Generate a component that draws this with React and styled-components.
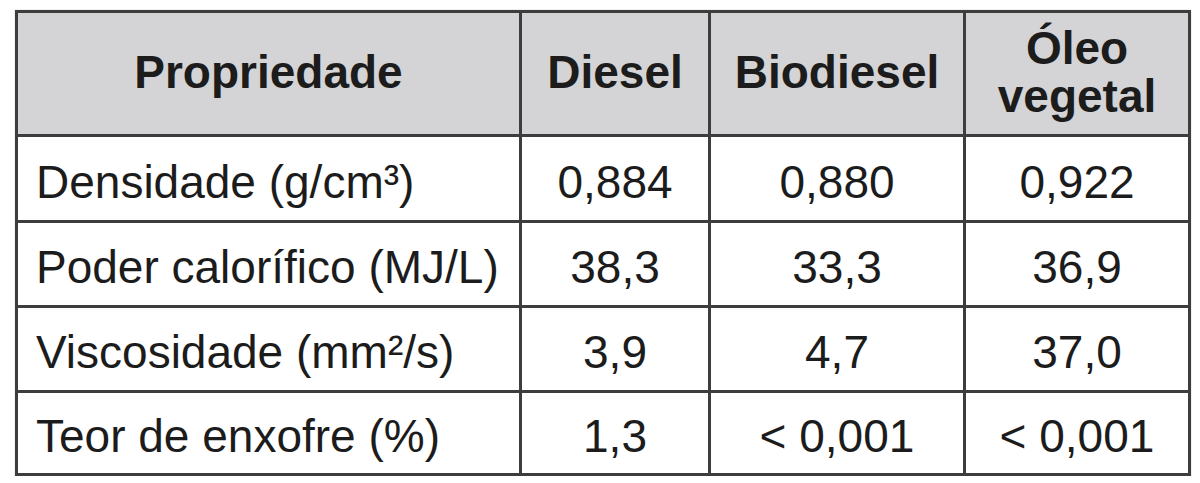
import React from 'react';
import styled, { createGlobalStyle } from 'styled-components';

const GlobalStyle = createGlobalStyle`
  html, body {
    margin: 0;
    padding: 0;
    background: #ffffff;
  }
  body {
    font-family: 'Liberation Sans', Arial, sans-serif;
    color: #1c1c1c;
  }
`;

const Page = styled.div`
  padding: 10px 0 0 15px;
`;

// grid lines are drawn by the dark background showing through the gaps
const Table = styled.div`
  display: inline-grid;
  grid-template-columns: 501px 186px 252px 222px;
  grid-template-rows: 121px 83px 82px 82px 80px;
  gap: 3px;
  padding: 3px;
  background: #3d3d3d;
  box-shadow: 0 0 1px rgba(0, 0, 0, 0.35);
`;

const HeadCell = styled.div`
  display: flex;
  align-items: center;
  justify-content: center;
  text-align: center;
  background: #d4d4d6;
  font-weight: 700;
  font-size: 46px;
  line-height: 1.04;
  padding-bottom: 2px;
`;

const Cell = styled.div`
  display: flex;
  align-items: center;
  justify-content: ${(p) => (p.$left ? 'flex-start' : 'center')};
  padding-left: ${(p) => (p.$left ? '18px' : '0')};
  padding-top: 6px;
  background: #ffffff;
  font-size: 46px;
  white-space: nowrap;
`;

const headers = ['Propriedade', 'Diesel', 'Biodiesel', ['Óleo', 'vegetal']];

const rows = [
  ['Densidade (g/cm³)', '0,884', '0,880', '0,922'],
  ['Poder calorífico (MJ/L)', '38,3', '33,3', '36,9'],
  ['Viscosidade (mm²/s)', '3,9', '4,7', '37,0'],
  ['Teor de enxofre (%)', '1,3', '< 0,001', '< 0,001'],
];

export default function App() {
  return (
    <>
      <GlobalStyle />
      <Page>
        <Table>
          {headers.map((h, i) => (
            <HeadCell key={i}>
              {Array.isArray(h) ? (
                <span>
                  {h[0]}
                  <br />
                  {h[1]}
                </span>
              ) : (
                h
              )}
            </HeadCell>
          ))}
          {rows.map((r, ri) =>
            r.map((v, ci) => (
              <Cell key={ri + '-' + ci} $left={ci === 0}>
                {v}
              </Cell>
            ))
          )}
        </Table>
      </Page>
    </>
  );
}
